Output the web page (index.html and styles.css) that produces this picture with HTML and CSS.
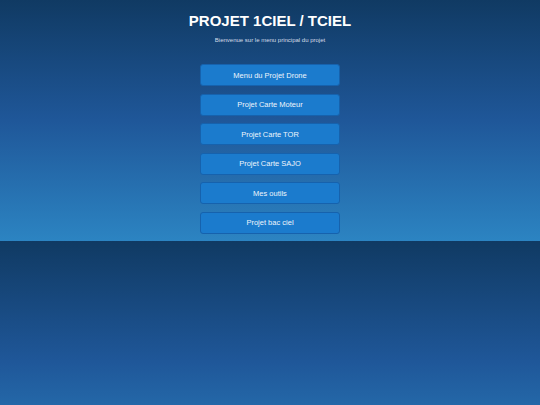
FILE: index.html
```html
<!DOCTYPE html>
<html lang="fr">
<head>
<meta charset="utf-8">
<title>Projet 1CIEL / TCIEL</title>
<link rel="stylesheet" href="styles.css">
</head>
<body>
<header class="header">
  <h1 class="title">PROJET 1CIEL / TCIEL</h1>
  <p class="subtitle">Bienvenue sur le menu principal du projet</p>
</header>
<nav class="menu">
  <a class="menu-btn" href="#">Menu du Projet Drone</a>
  <a class="menu-btn" href="#">Projet Carte Moteur</a>
  <a class="menu-btn" href="#">Projet Carte TOR</a>
  <a class="menu-btn" href="#">Projet Carte SAJO</a>
  <a class="menu-btn" href="#">Mes outils</a>
  <a class="menu-btn" href="#">Projet bac ciel</a>
</nav>
</body>
</html>
```
FILE: styles.css
```css
body {
  margin: 0;
  padding: 12px 0 7px;
  font-family: "Liberation Sans", Arial, sans-serif;
  color: #ffffff;
  text-align: center;
  background: linear-gradient(to bottom, #103a63 0%, #1f5799 50%, #2c84c2 100%);
}

.header {
  display: flex;
  flex-direction: column;
  align-items: center;
}

.title {
  margin: 0;
  font-size: 15px;
  line-height: 18px;
  font-weight: bold;
  color: #ffffff;
}

.subtitle {
  margin: 6px 0 0;
  font-size: 6px;
  line-height: 8px;
  color: #d6dde8;
}

.menu {
  display: flex;
  flex-direction: column;
  align-items: center;
  gap: 7.6px;
  margin-top: 20px;
}

.menu-btn {
  box-sizing: border-box;
  display: flex;
  align-items: center;
  justify-content: center;
  width: 140px;
  height: 22px;
  background: #1b7bcd;
  border: 1px solid #1662ad;
  border-radius: 3px;
  color: #eef5fc;
  font-size: 7.5px;
  text-decoration: none;
}
```
